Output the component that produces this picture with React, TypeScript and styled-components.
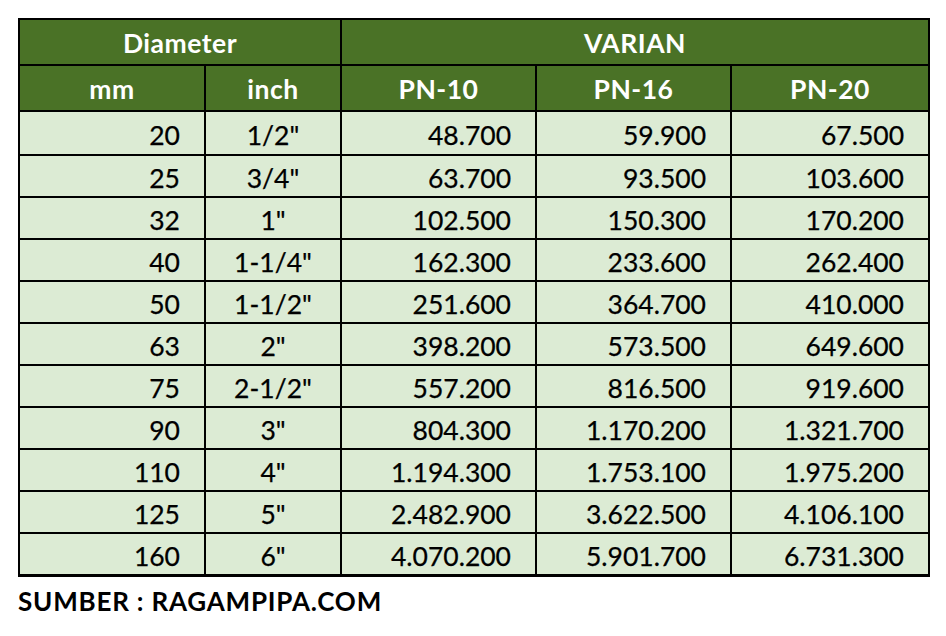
import React from "react";
import styled, { createGlobalStyle } from "styled-components";

const Global = createGlobalStyle`
  html, body { margin: 0; padding: 0; background: #ffffff; }
  body { font-family: Lato, "Open Sans", sans-serif; }
`;

const Page = styled.div`
  width: 946px;
  height: 636px;
  padding: 18px 0 0 18px;
  box-sizing: border-box;
  background: #ffffff;
`;

const Grid = styled.div`
  display: grid;
  width: fit-content;
  grid-template-columns: 184px 134px 193px 193px 196px;
  grid-template-rows: 44px 44px 42px repeat(10, 40px);
  gap: 2px;
  padding: 2px 2px 3px 2px;
  background: #000000;
`;

const HeadCell = styled.div<{ $span?: number }>`
  grid-column: span ${(p) => p.$span ?? 1};
  background: #4a7226;
  color: #ffffff;
  font-family: Lato, "Open Sans", sans-serif;
  font-weight: 700;
  font-size: 26.5px;
  letter-spacing: 0.5px;
  display: flex;
  align-items: center;
  justify-content: center;
  padding-top: 1px;
  box-sizing: border-box;
`;

const Cell = styled.div<{ $align: "right" | "center" }>`
  background: #dcebd4;
  color: #000000;
  font-family: Lato, "Open Sans", sans-serif;
  font-size: 26.5px;
  -webkit-text-stroke: 0.25px #000000;
  display: flex;
  align-items: center;
  justify-content: ${(p) => (p.$align === "right" ? "flex-end" : "center")};
  padding: 3px ${(p) => (p.$align === "right" ? "24px" : "0")} 0 0;
  box-sizing: border-box;
  white-space: nowrap;
`;

const Source = styled.div`
  margin-top: 8px;
  font-family: Lato, "Open Sans", sans-serif;
  font-weight: 700;
  font-size: 26px;
  letter-spacing: 0.8px;
  color: #000000;
`;

const rows: [string, string, string, string, string][] = [
  ["20", '1/2"', "48.700", "59.900", "67.500"],
  ["25", '3/4"', "63.700", "93.500", "103.600"],
  ["32", '1"', "102.500", "150.300", "170.200"],
  ["40", '1-1/4"', "162.300", "233.600", "262.400"],
  ["50", '1-1/2"', "251.600", "364.700", "410.000"],
  ["63", '2"', "398.200", "573.500", "649.600"],
  ["75", '2-1/2"', "557.200", "816.500", "919.600"],
  ["90", '3"', "804.300", "1.170.200", "1.321.700"],
  ["110", '4"', "1.194.300", "1.753.100", "1.975.200"],
  ["125", '5"', "2.482.900", "3.622.500", "4.106.100"],
  ["160", '6"', "4.070.200", "5.901.700", "6.731.300"],
];

export default function App() {
  return (
    <Page>
      <Global />
      <Grid>
        <HeadCell $span={2}>Diameter</HeadCell>
        <HeadCell $span={3}>VARIAN</HeadCell>
        <HeadCell>mm</HeadCell>
        <HeadCell>inch</HeadCell>
        <HeadCell>PN-10</HeadCell>
        <HeadCell>PN-16</HeadCell>
        <HeadCell>PN-20</HeadCell>
        {rows.map((r) => (
          <React.Fragment key={r[0]}>
            <Cell $align="right">{r[0]}</Cell>
            <Cell $align="center">{r[1]}</Cell>
            <Cell $align="right">{r[2]}</Cell>
            <Cell $align="right">{r[3]}</Cell>
            <Cell $align="right">{r[4]}</Cell>
          </React.Fragment>
        ))}
      </Grid>
      <Source>SUMBER : RAGAMPIPA.COM</Source>
    </Page>
  );
}
